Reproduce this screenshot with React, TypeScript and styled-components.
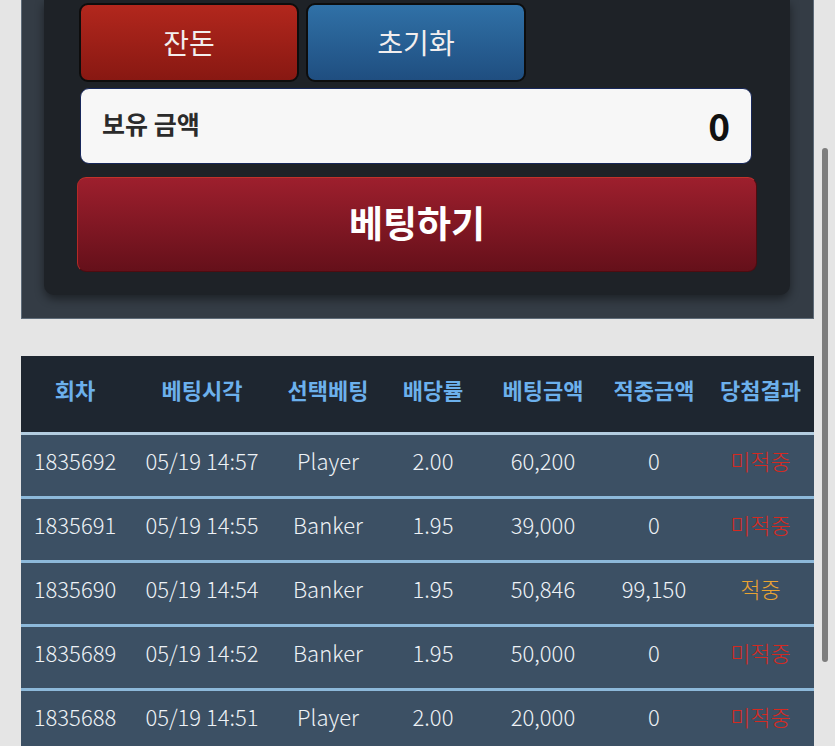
import styled, { createGlobalStyle } from "styled-components";

const GlobalStyle = createGlobalStyle`
  html, body {
    margin: 0;
    padding: 0;
    background: #e5e5e5;
    font-family: "Noto Sans CJK KR", "Noto Sans", sans-serif;
    overflow: hidden;
  }
`;

type Bet = {
  round: string;
  time: string;
  pick: string;
  odds: string;
  amount: string;
  win: string;
  hit: boolean;
};

const bets: Bet[] = [
  { round: "1835692", time: "05/19 14:57", pick: "Player", odds: "2.00", amount: "60,200", win: "0", hit: false },
  { round: "1835691", time: "05/19 14:55", pick: "Banker", odds: "1.95", amount: "39,000", win: "0", hit: false },
  { round: "1835690", time: "05/19 14:54", pick: "Banker", odds: "1.95", amount: "50,846", win: "99,150", hit: true },
  { round: "1835689", time: "05/19 14:52", pick: "Banker", odds: "1.95", amount: "50,000", win: "0", hit: false },
  { round: "1835688", time: "05/19 14:51", pick: "Player", odds: "2.00", amount: "20,000", win: "0", hit: false },
];

const columns = ["회차", "베팅시각", "선택베팅", "배당률", "베팅금액", "적중금액", "당첨결과"];
const colWidths = [108, 146, 106, 104, 116, 106, 107];

const Page = styled.div`
  padding: 0 21px;
`;

const Panel = styled.div`
  background: #343c45;
  border: 1px solid #5e6b78;
  border-top: none;
  padding: 0 23px 23px 22px;
`;

const Card = styled.div`
  background: #1e2227;
  border-radius: 0 0 10px 10px;
  box-shadow: 0 4px 10px rgba(0, 0, 0, 0.45);
  padding: 3px 33px 23px 33px;
`;

const ButtonRow = styled.div`
  display: flex;
  gap: 7px;
  padding-left: 2px;
`;

const SmallButton = styled.button<{ $tone: "red" | "blue" }>`
  width: 220px;
  height: 79px;
  border: 2px solid #0d0d0d;
  border-radius: 9px;
  background: ${(p) =>
    p.$tone === "red"
      ? "linear-gradient(#b2271d, #881812)"
      : "linear-gradient(#3071a7, #1f4e80)"};
  color: #f2eeee;
  font-family: inherit;
  font-size: 28px;
  font-weight: 400;
  padding: 0 0 2px;
`;

const BalanceBox = styled.div`
  margin: 6px 5px 0 3px;
  height: 74px;
  background: #f7f7f7;
  border: 1px solid #17275a;
  border-radius: 9px;
  display: flex;
  align-items: center;
  justify-content: space-between;
  padding: 0 21px 0 21px;
`;

const BalanceLabel = styled.span`
  font-size: 25px;
  font-weight: 700;
  color: #2b2b2b;
  margin-top: -7px;
`;

const BalanceValue = styled.span`
  font-size: 37px;
  font-weight: 700;
  color: #111;
  margin-top: -2px;
`;

const BetButton = styled.button`
  display: block;
  width: 100%;
  margin-top: 13px;
  height: 95px;
  border: 1px solid #4e0c10;
  border-top-color: #c2322a;
  border-left-color: #b42a26;
  border-radius: 9px;
  background: linear-gradient(#9d1f2d, #65101a);
  color: #ffffff;
  font-family: inherit;
  font-size: 37px;
  font-weight: 700;
  padding: 0 0 6px;
`;

const Table = styled.table`
  margin-top: 37px;
  width: 100%;
  border-collapse: collapse;
  table-layout: fixed;
`;

const HeadCell = styled.th`
  height: 66px;
  background: #1e2630;
  color: #6cb0ec;
  font-size: 22px;
  font-weight: 700;
  padding: 0 0 10px;
  text-align: center;
  white-space: nowrap;
`;

const Row = styled.tr<{ $first: boolean }>`
  background: #3c5064;
  border-top: 3px solid ${(p) => (p.$first ? "#b4cde0" : "#8db9da")};
`;

const Cell = styled.td<{ $color?: string }>`
  height: 50px;
  padding: 0 0 11px;
  text-align: center;
  color: ${(p) => p.$color || "#eef2f6"};
  font-size: 22px;
  font-weight: 300;
  white-space: nowrap;
`;

const ScrollThumb = styled.div`
  position: fixed;
  left: 822px;
  top: 148px;
  width: 6px;
  height: 514px;
  border-radius: 3px;
  background: #7d7d7d;
`;

export default function App() {
  return (
    <>
      <GlobalStyle />
      <Page>
        <Panel>
          <Card>
            <ButtonRow>
              <SmallButton $tone="red">잔돈</SmallButton>
              <SmallButton $tone="blue">초기화</SmallButton>
            </ButtonRow>
            <BalanceBox>
              <BalanceLabel>보유 금액</BalanceLabel>
              <BalanceValue>0</BalanceValue>
            </BalanceBox>
            <BetButton>베팅하기</BetButton>
          </Card>
        </Panel>
        <Table>
          <colgroup>
            {colWidths.map((w, i) => (
              <col key={i} style={{ width: w }} />
            ))}
          </colgroup>
          <thead>
            <tr>
              {columns.map((c) => (
                <HeadCell key={c}>{c}</HeadCell>
              ))}
            </tr>
          </thead>
          <tbody>
            {bets.map((b, i) => (
              <Row key={b.round} $first={i === 0}>
                <Cell>{b.round}</Cell>
                <Cell>{b.time}</Cell>
                <Cell>{b.pick}</Cell>
                <Cell>{b.odds}</Cell>
                <Cell>{b.amount}</Cell>
                <Cell>{b.win}</Cell>
                <Cell $color={b.hit ? "#e9a332" : "#d42a22"}>
                  {b.hit ? "적중" : "미적중"}
                </Cell>
              </Row>
            ))}
          </tbody>
        </Table>
      </Page>
      <ScrollThumb />
    </>
  );
}
